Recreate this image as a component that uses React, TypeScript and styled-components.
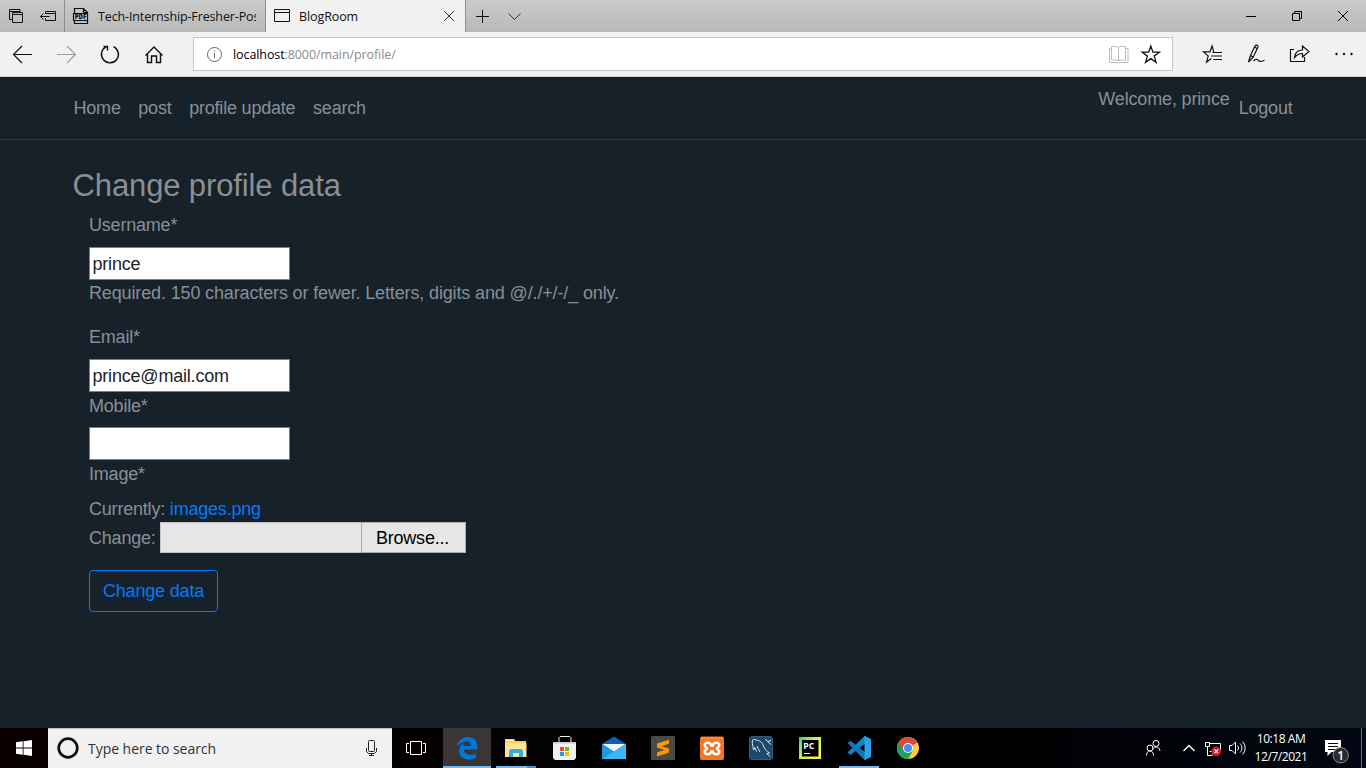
import React from "react";
import styled, { createGlobalStyle } from "styled-components";

const Global = createGlobalStyle`
  * { box-sizing: border-box; }
  body { margin: 0; overflow: hidden; background: #17212a; }
`;

const Screen = styled.div`
  width: 1366px;
  height: 768px;
  display: flex;
  flex-direction: column;
  overflow: hidden;
  background: #17212a;
`;

const uiFont = `"Open Sans", "Noto Sans", sans-serif`;
const pageFont = `"Liberation Sans", Arial, sans-serif`;

/* ---------- browser chrome ---------- */

const TabBar = styled.div`
  height: 32px;
  flex: none;
  display: flex;
  background: linear-gradient(#cacaca, #b9b9b9);
  font: 12.5px/34px ${uiFont};
  color: #111;
`;

const TabTools = styled.div`
  display: flex;
  width: 65px;
  border-right: 1px solid #8e8e8e;
`;

const Tab = styled.div<{ $active?: boolean; $width: number }>`
  display: flex;
  width: ${(p) => p.$width}px;
  border-right: 1px solid #8e8e8e;
  background: ${(p) => (p.$active ? "#f1f1f1" : "transparent")};
`;

const TabTitle = styled.span<{ $width: number; $spacing?: number }>`
  display: block;
  width: ${(p) => p.$width}px;
  height: 32px;
  overflow: hidden;
  white-space: nowrap;
  letter-spacing: ${(p) => p.$spacing ?? -0.1}px;
`;

const Spacer = styled.div`
  flex: 1;
`;

const Toolbar = styled.div`
  height: 45px;
  flex: none;
  display: flex;
  background: #f1f1f1;
  border-bottom: 1px solid #cfcfcf;
`;

const AddressBar = styled.div`
  width: 980px;
  height: 34px;
  margin-top: 5px;
  display: flex;
  background: #fff;
  border: 1px solid #c8c8c8;
  font: 12.5px/34px ${uiFont};
  color: #000;
`;

const Url = styled.span`
  flex: 1;
  letter-spacing: -0.09px;
  em {
    font-style: normal;
    color: #8a8a8a;
  }
`;

/* ---------- web page ---------- */

const Page = styled.div`
  flex: 1;
  font: 18px/27px ${pageFont};
  letter-spacing: -0.2px;
  color: #8a8f94;
`;

const Navbar = styled.nav`
  height: 63px;
  padding: 18px 73.5px 0 73.5px;
  display: flex;
  justify-content: space-between;
  border-bottom: 1px solid #2b3641;
`;

const NavGroup = styled.div<{ $gap: number }>`
  display: flex;
  gap: ${(p) => p.$gap}px;
`;

const Welcome = styled.span`
  margin-top: -9px;
  letter-spacing: -0.16px;
`;

const Main = styled.main`
  padding: 26px 72px;
`;

const Title = styled.h2`
  margin: 0 0 0 0.5px;
  padding-top: 1px;
  font-size: 31px;
  line-height: 37px;
  font-weight: 400;
  letter-spacing: -0.12px;
`;

const Form = styled.form`
  padding: 8px 17px 0;
`;

const Label = styled.label<{ $drop?: number }>`
  display: block;
  height: 27px;
  padding-top: ${(p) => p.$drop ?? 0}px;
  margin-bottom: 8px;
`;

const Input = styled.input`
  display: block;
  width: 201px;
  height: 33px;
  padding: 3px 2px 1px 2.5px;
  border: 1px solid #7c8084;
  border-radius: 0;
  background: #fff;
  color: #212529;
  font: inherit;
  letter-spacing: -0.2px;
  outline: none;
`;

const Help = styled.p`
  margin: 0 0 17px;
  letter-spacing: -0.14px;
`;

const Current = styled.div`
  height: 27px;
  padding-top: 1px;
  a {
    color: #007bff;
    text-decoration: none;
  }
`;

const FileRow = styled.div`
  display: flex;
  height: 31px;
  line-height: 33px;
`;

const FileCaption = styled.span`
  width: 71px;
`;

const FileName = styled.span`
  width: 201px;
  background: #e6e6e6;
  border: 1px solid #c4c4c4;
  border-right: 0;
`;

const Browse = styled.button`
  width: 105px;
  padding: 2px 2px 0 0;
  border: 1px solid #adadad;
  background: #e6e6e6;
  color: #000;
  font: 18px/27px ${pageFont};
  letter-spacing: -0.2px;
`;

const Submit = styled.button`
  width: 129px;
  height: 42px;
  margin-top: 17px;
  padding: 0;
  background: transparent;
  border: 1px solid #007bff;
  border-radius: 4px;
  color: #007bff;
  font: 18px/27px ${pageFont};
  letter-spacing: -0.17px;
`;

/* ---------- taskbar ---------- */

const Taskbar = styled.div`
  height: 40px;
  flex: none;
  display: flex;
  background: linear-gradient(90deg, #0a0000, #030101 40%, #010103 75%, #020713);
  font-family: ${uiFont};
`;

const SearchBox = styled.div`
  width: 344px;
  display: flex;
  background: #f1f1f1;
  border-top: 1px solid #bdbdbd;
  color: #333;
  font-size: 14px;
  line-height: 39px;
`;

const SearchText = styled.span`
  flex: 1;
  letter-spacing: -0.04px;
`;

const TaskButton = styled.div<{ $width: number; $active?: boolean; $line?: string }>`
  width: ${(p) => p.$width}px;
  background: ${(p) => (p.$active ? "#3b3635" : "transparent")};
  box-shadow: ${(p) => (p.$line ? `inset 0 -2px ${p.$line}` : "none")};
`;

const Clock = styled.div`
  width: 70px;
  padding-top: 2px;
  color: #fff;
  font-size: 12px;
  line-height: 18px;
  letter-spacing: -0.45px;
  text-align: center;
  white-space: nowrap;
`;

const ShowDesktop = styled.div`
  width: 5px;
  border-left: 1px solid #6c6f75;
`;

const Svg = styled.svg`
  display: block;
  flex: none;
`;

/* A glyph drawn on the screen grid; x/y is the corner of its slot. */
type GlyphProps = { x: number; y: number; w: number; h: number; c?: string; sw?: number; children: React.ReactNode };
const Glyph = ({ x, y, w, h, c = "#111", sw = 1, children }: GlyphProps) => (
  <Svg width={w} height={h} viewBox={`${x} ${y} ${w} ${h}`} fill="none" stroke={c} strokeWidth={sw}>
    {children}
  </Svg>
);

const star = (cx: number, cy: number, r: number) =>
  Array.from({ length: 10 }, (_, i) => {
    const a = (Math.PI / 5) * i - Math.PI / 2;
    const k = i % 2 ? r * 0.4 : r;
    return `${(cx + k * Math.cos(a)).toFixed(2)},${(cy + k * Math.sin(a)).toFixed(2)}`;
  }).join(" ");

const BrowserTabs = () => (
  <TabBar>
    <TabTools>
      <Glyph x={0} y={0} w={32} h={32}>
        <path d="M12.5 19.5h-3v-10h10.500v3M9 11.500h11M12.500 12.500h10v10h-10zM12 14.500h11" />
      </Glyph>
      <Glyph x={32} y={0} w={32} h={32}>
        <path d="M45.500 14v-2.500h10v9h-10V18M45 13.500h11M40.500 16.500h9M43.500 13.500l-3 3 3 3" />
      </Glyph>
    </TabTools>
    <Tab $width={201}>
      <Glyph x={65} y={0} w={33} h={32}>
        <path d="M74.500 13V8.500h9l4 4V13M83.500 8.500v4h4M74.500 20.500v3h13v-3M73.500 13.500h14v7h-14z" strokeWidth="1.200" />
        <text x="74.700" y="19.300" fill="#111" stroke="none" fontSize="6" fontWeight="800" textLength="11.600" lengthAdjust="spacingAndGlyphs">PDF</text>
      </Glyph>
      <TabTitle $width={158} $spacing={-0.13}>Tech-Internship-Fresher-Pos</TabTitle>
    </Tab>
    <Tab $active $width={200}>
      <Glyph x={266} y={0} w={33} h={32}>
        <path d="M274.500 9.500h15v12h-15zM274 12.500h16" />
      </Glyph>
      <TabTitle $width={133}>BlogRoom</TabTitle>
      <Glyph x={432} y={0} w={33} h={32} c="#333">
        <path d="M444 11l10 10M454 11l-10 10" />
      </Glyph>
    </Tab>
    <Glyph x={466} y={0} w={70} h={32}>
      <path d="M476 16.500h13M482.500 10v13" />
      <path d="M508.500 13.500l6 6 6-6" stroke="#333" />
    </Glyph>
    <Spacer />
    <Glyph x={1228} y={0} w={138} h={32} c="#000">
      <path d="M1246 16.500h10M1292.500 13.500h7v7h-7zM1294.500 13v-1.500h7v7h-2M1338 11l10 10M1348 11l-10 10" />
    </Glyph>
  </TabBar>
);

const BrowserToolbar = () => (
  <Toolbar>
    <Glyph x={0} y={32} w={193} h={44}>
      <path d="M13 54.500h19M22 46l-8.500 8.500L22 63" strokeWidth="1.200" />
      <path d="M57 54.500h19M67 46l8.500 8.500L67 63" stroke="#a0a0a0" strokeWidth="1.200" />
      <path d="M113.500 46.600a8.500 8.500 0 1 1-7.500.2M103.500 46.500h4v4" strokeWidth="1.400" />
      <path d="M145.500 55.500l8.500-8.500 8.500 8.500M147.500 54v8.500h4V56h5v6.500h4V54" strokeWidth="1.400" />
    </Glyph>
    <AddressBar>
      <Glyph x={194} y={38} w={39} h={32} c="#666">
        <circle cx="214.500" cy="54.500" r="7" />
        <path d="M214.500 53v5M214.500 50.500v1.200" />
      </Glyph>
      <Url>localhost<em>:8000/main/profile/</em></Url>
      <Glyph x={1102} y={38} w={70} h={32}>
        <path d="M1111.500 46.500h5l2 1 2-1h5v13.500h-5l-2 1-2-1h-5zM1118.500 47.500v13.500M1111 48.500h-1.500v14h7.500l1.500.8 1.500-.8h8v-14h-2" stroke="#bdbdbd" />
        <polygon points={star(1150.8, 55, 9)} strokeWidth="1.300" />
      </Glyph>
    </AddressBar>
    <Glyph x={1173} y={32} w={193} h={44}>
      <path d="M1213.800 52l-1.700-6-2.200 5.900h-6.400l4.700 4-1.700 6.300 4.800-3.600M1212.500 52.500h9.500M1211 56h11M1213 59.500h9" strokeWidth="1.200" />
      <path d="M1248.500 62l2-6.500 4.500-9.500c1.500-1.800 3.800-.5 2.800 1.500l-4.800 10zM1250.500 55.500l2.500 1.500M1254.500 47l2.500 1.500M1253.500 61c3-3 4.500-1 5.500 0s2.500.5 5.500-.8" strokeWidth="1.200" />
      <path d="M1294 49.500h-3.500v12h14V57M1294.500 57.500c.5-5 3-7.500 8-7.500v-4l6.500 5.500-6.500 5.500v-3.500c-3.500 0-5.500 1-8 4z" strokeWidth="1.200" />
      <g fill="#111" stroke="none">
        <circle cx="1336.500" cy="54" r="1.200" />
        <circle cx="1344" cy="54" r="1.200" />
        <circle cx="1351.500" cy="54" r="1.200" />
      </g>
    </Glyph>
  </Toolbar>
);

const BlogPage = () => (
  <Page>
    <Navbar>
      <NavGroup $gap={17.6}>
        <span>Home</span>
        <span>post</span>
        <span>profile update</span>
        <span>search</span>
      </NavGroup>
      <NavGroup $gap={9}>
        <Welcome>Welcome, prince</Welcome>
        <span>Logout</span>
      </NavGroup>
    </Navbar>
    <Main>
      <Title>Change profile data</Title>
      <Form>
        <Label>Username*</Label>
        <Input defaultValue="prince" />
        <Help>Required. 150 characters or fewer. Letters, digits and @/./+/-/_ only.</Help>
        <Label>Email*</Label>
        <Input defaultValue="prince@mail.com" />
        <Label $drop={1}>Mobile*</Label>
        <Input />
        <Label $drop={1}>Image*</Label>
        <Current>
          Currently: <a>images.png</a>
        </Current>
        <FileRow>
          <FileCaption>Change:</FileCaption>
          <FileName />
          <Browse type="button">Browse...</Browse>
        </FileRow>
        <Submit type="button">Change data</Submit>
      </Form>
    </Main>
  </Page>
);

const WindowsTaskbar = () => (
  <Taskbar>
    <Glyph x={0} y={728} w={48} h={40}>
      <path d="M16 742.300l6.700-1v6.300H16zM23.500 741.200l8.500-1.200v7.600h-8.500zM16 748.400h6.700v6.300l-6.700-1zM23.500 748.400H32v7.600l-8.500-1.200z" fill="#fff" stroke="none" />
    </Glyph>
    <SearchBox>
      <Glyph x={48} y={729} w={40} h={39}>
        <circle cx="68" cy="748" r="9.300" strokeWidth="2.700" />
      </Glyph>
      <SearchText>Type here to search</SearchText>
      <Glyph x={352} y={729} w={40} h={39} c="#222">
        <rect x="368.500" y="740.500" width="6" height="11" rx="1" />
        <path d="M366.500 748v3.500l2 2h6l2-2V748M371.500 753.500v2M369 755.500h5" />
      </Glyph>
    </SearchBox>
    <TaskButton $width={51}>
      <Glyph x={392} y={728} w={51} h={40} c="#fff">
        <path d="M410.500 741.500h11v13h-11zM409 743.500h-2.500v9h2.500M423 743.500h2.500v9H423" />
      </Glyph>
    </TaskButton>
    <TaskButton $width={48} $active $line="#76b9ed">
      <Glyph x={443} y={728} w={48} h={40}>
        <path d="M457 747.300c.8-6 5-10.200 10.800-10.200 6.200 0 9.500 4.300 9.500 9.800v2.700h-13.500c.1 3.600 3 5.200 6.300 5.200 2.300 0 4.200-.6 5.900-1.600v4.500c-2 1.100-4.300 1.700-7.200 1.700-5.900 0-9.700-3.500-9.700-8.700 0-3.300 1.800-6.200 4.900-7.700-.6.800-1 1.900-1.100 3h8.100c0-3.100-1.500-4.700-4.500-4.700-3.700 0-7.100 2.200-9.500 6z" fill="#0078d7" stroke="none" />
      </Glyph>
    </TaskButton>
    <TaskButton $width={49}>
      <Glyph x={491} y={728} w={49} h={40}>
        <g stroke="none">
          <path d="M505 739h9l1.500 2H526v16h-21z" fill="#ffd05b" />
          <path d="M505 743h21.500v14H505z" fill="#ffe493" />
          <path d="M506 740h7v1h-7z" fill="#fff1bd" />
          <path d="M509 757v-6l1.500-2h11l1.500 2v6h-4v-4h-6v4z" fill="#33aee5" />
          <path d="M496 766h31v2h-31z" fill="#76b9ed" />
          <path d="M527 766h9v2h-9z" fill="#568ab4" />
        </g>
      </Glyph>
    </TaskButton>
    <TaskButton $width={49}>
      <Glyph x={540} y={728} w={49} h={40}>
        <path d="M559 743v-5.500l1-1h10l1 1v5.500" stroke="#e8e8e8" />
        <g stroke="none">
          <path d="M553 742h23v16l-2 2h-19l-2-2z" fill="#f0f0f0" />
          <path d="M553 742h23v1.500h-23z" fill="#c9c9c9" />
          <path d="M560 747h4v4h-4z" fill="#e74a25" />
          <path d="M565 747h4v4h-4z" fill="#7bb813" />
          <path d="M560 752h4v4h-4z" fill="#13a2ec" />
          <path d="M565 752h4v4h-4z" fill="#fdb80a" />
        </g>
      </Glyph>
    </TaskButton>
    <TaskButton $width={49}>
      <Glyph x={589} y={728} w={49} h={40}>
        <g stroke="none">
          <path d="M602 744l12-7.500 12 7.500v15h-24z" fill="#0b62b8" />
          <path d="M602 744v15h24z" fill="#1b98e5" />
          <path d="M626 744v15h-24z" fill="#38b8f3" />
          <path d="M602.500 744h23l-11.500 7.500z" fill="#f5f5f5" />
        </g>
      </Glyph>
    </TaskButton>
    <TaskButton $width={49}>
      <Glyph x={638} y={728} w={49} h={40}>
        <rect x="651" y="736" width="24" height="24" rx="1.500" fill="#4a4a4a" stroke="none" />
        <path d="M657 743.500l12-3.800v4l-7.500 2.500 7.500 2.400v4l-12 3.900v-4l7.400-2.500-7.400-2.400z" fill="#ff9800" stroke="none" />
      </Glyph>
    </TaskButton>
    <TaskButton $width={49}>
      <Glyph x={687} y={728} w={49} h={40}>
        <rect x="700" y="736.500" width="24" height="23.500" rx="2" fill="#f37623" stroke="none" />
        <path d="M701 738h22" stroke="#f9a46b" />
        <path d="M712 746.700C711 742 704.700 741.500 704.700 745.300C704.700 747.300 707 747.500 707 748.500C707 749.500 704.700 749.700 704.700 751.700C704.700 755.500 711 755 712 750.300C713 755 719.300 755.500 719.300 751.700C719.300 749.700 717 749.500 717 748.500C717 747.500 719.300 747.300 719.300 745.300C719.300 741.500 713 742 712 746.700Z" stroke="#fff" strokeWidth="2.600" />
      </Glyph>
    </TaskButton>
    <TaskButton $width={49}>
      <Glyph x={736} y={728} w={49} h={40} c="#dce9f2">
        <rect x="749.500" y="736.500" width="23" height="23" rx="2.500" fill="#1d4a6b" stroke="#2f5f80" />
        <path d="M753.500 750c-.3-3-1.500-6-1.200-9 .3-2 2-2 3.500-1 4 .5 6.200 2 7.700 6 1 3 2.800 5 6 7l-2.700.6 3.500 3.200M753.500 750l1.300-2.500 1.700 4M757 746c1 2.500 2 4 2.800 6M765.500 739l2 2.500 3.500 3M767.500 741.500l3.500-1" />
      </Glyph>
    </TaskButton>
    <TaskButton $width={54}>
      <Glyph x={785} y={728} w={54} h={40}>
        <defs>
          <linearGradient id="pc" x1="0" y1="0" x2="1" y2=".7">
            <stop offset="0" stopColor="#21d789" />
            <stop offset=".5" stopColor="#c9ee52" />
            <stop offset="1" stopColor="#fcf84a" />
          </linearGradient>
        </defs>
        <path d="M799 737h22v22h-22z" fill="url(#pc)" stroke="none" />
        <path d="M802 740h16.500v16.500H802z" fill="#000" stroke="none" />
        <path d="M804 753.500h6" stroke="#fff" />
        <text x="803.300" y="748.500" fill="#fff" stroke="none" fontSize="9" fontWeight="700" textLength="11" lengthAdjust="spacingAndGlyphs">PC</text>
      </Glyph>
    </TaskButton>
    <TaskButton $width={40} $line="#76b9ed">
      <Glyph x={839} y={728} w={40} h={40}>
        <g stroke="none">
          <path d="M864.500 736l1.500.3v6.700l-15.500 12-3-2.500z" fill="#1283c9" />
          <path d="M847.500 743l3-2.200 15.500 12v6.700l-1.500.5z" fill="#1074b6" />
          <path d="M864.500 736l6.500 3v18l-6.500 3z" fill="#2ba2ec" />
        </g>
      </Glyph>
    </TaskButton>
    <TaskButton $width={56}>
      <Glyph x={879} y={728} w={56} h={40}>
        <g stroke="none">
          <circle cx="908" cy="748" r="11" fill="#ffcd40" />
          <path d="M908 748l-9.530-5.500a11 11 0 0 1 19.050 0z" fill="#dd4b3e" />
          <path d="M898.470 742.500a11 11 0 0 0 9.530 16.500l4.800-8.200-4.800-2.800z" fill="#1aa260" />
          <path d="M898.470 742.500l4.700 8.300L908 743z" fill="#dd4b3e" />
          <circle cx="908" cy="748" r="5" fill="#fff" />
          <circle cx="908" cy="748" r="4" fill="#4a8af4" />
        </g>
      </Glyph>
    </TaskButton>
    <Spacer />
    <Glyph x={1136} y={728} w={110} h={40} c="#fff">
      <circle cx="1156" cy="743.500" r="3" />
      <path d="M1152.500 750c.5-2 1.500-3 3.500-3s3.500 1 4 4" />
      <circle cx="1150" cy="748" r="3" />
      <path d="M1146.500 755.500c0-3 1.500-4.500 3.500-4.500s3.500 1.500 3.500 4.500" />
      <path d="M1183.500 751l5.500-5.500 5.500 5.500" strokeWidth="1.300" />
      <path d="M1209.500 743.500h11v8h-11M1205.500 742.500h4v4h-4zM1207.500 747v8.500h5M1213 751v4" />
      <circle cx="1216.300" cy="751.300" r="4.800" fill="#e81123" stroke="none" />
      <path d="M1214.500 749.500l3.600 3.600M1218.100 749.500l-3.600 3.600" strokeWidth="1.200" />
      <path d="M1229.500 745.500h2.500l3.500-3.500v12l-3.500-3.500h-2.500zM1237.500 745.500c1.300 1.500 1.300 3.500 0 5M1240 743.500c2.500 2.500 2.500 6.500 0 9M1242.500 741.500c3.500 3.700 3.500 9.300 0 13" />
    </Glyph>
    <Clock>
      10:18 AM
      <br />
      12/7/2021
    </Clock>
    <Glyph x={1316} y={728} w={45} h={40}>
      <path d="M1325 740h16v12h-9.500l-4 4v-4H1325z" fill="#fff" stroke="none" />
      <path d="M1328 743.500h10M1328 746.500h10M1328 749.500h7" stroke="#05080f" />
      <circle cx="1340.700" cy="755.300" r="7.700" fill="#2c2c2c" stroke="#8e8e8e" />
      <text x="1340.600" y="759.500" fill="#fff" stroke="none" fontSize="12" fontWeight="600" textAnchor="middle">1</text>
    </Glyph>
    <ShowDesktop />
  </Taskbar>
);

export default function App() {
  return (
    <Screen>
      <Global />
      <BrowserTabs />
      <BrowserToolbar />
      <BlogPage />
      <WindowsTaskbar />
    </Screen>
  );
}
